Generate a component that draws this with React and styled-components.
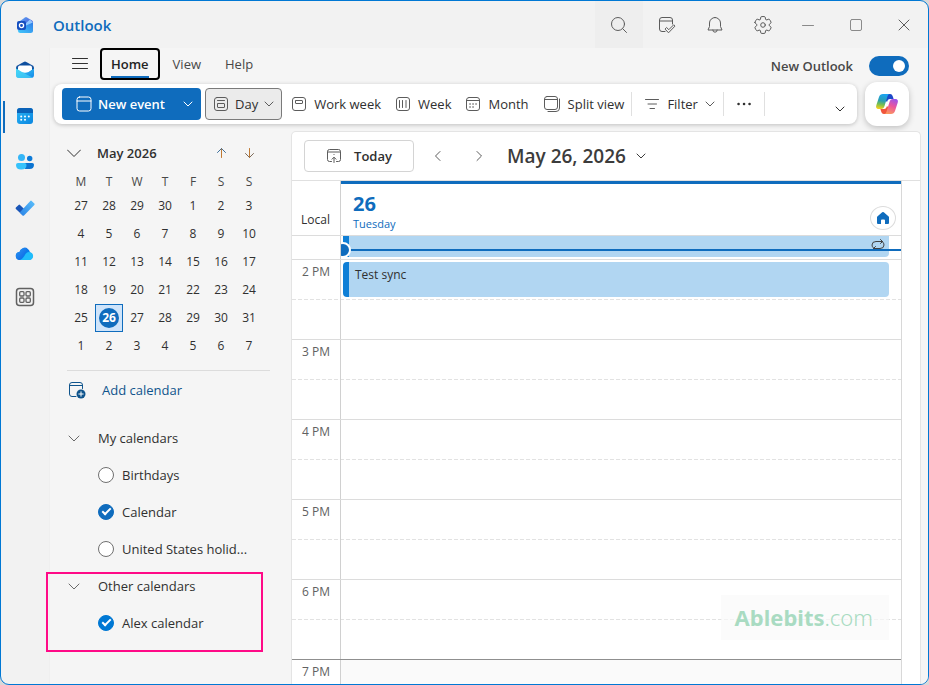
import React, { useState } from "react"
import styled, { createGlobalStyle } from "styled-components"

const DAYS = ["M", "T", "W", "T", "F", "S", "S"]
const WEEKS = [
  [27, 28, 29, 30, 1, 2, 3],
  [4, 5, 6, 7, 8, 9, 10],
  [11, 12, 13, 14, 15, 16, 17],
  [18, 19, 20, 21, 22, 23, 24],
  [25, 26, 27, 28, 29, 30, 31],
  [1, 2, 3, 4, 5, 6, 7],
]
const HOURS = ["3 PM", "4 PM", "5 PM", "6 PM"]

/* ---------- icons ---------- */

const Line = ({ w = 16, h = w, children, ...rest }) => (
  <svg
    width={w}
    height={h}
    viewBox={`0 0 ${w} ${h}`}
    fill="none"
    stroke="currentColor"
    strokeLinecap="round"
    strokeLinejoin="round"
    aria-hidden="true"
    {...rest}
  >
    {children}
  </svg>
)

const ChevronDown = ({ w = 10 }) => (
  <Line w={w} h={w}>
    <path d={`M1 ${w / 2 - 2}L${w / 2} ${w - 3}L${w - 1} ${w / 2 - 2}`} />
  </Line>
)

const WideChevron = () => (
  <Line w={14} h={14}>
    <path d="M.5 4L7 10.5L13.5 4" />
  </Line>
)

const OutlookLogo = () => (
  <svg width="18" height="18" viewBox="0 0 18 18" aria-hidden="true">
    <defs>
      <linearGradient id="olTop" x1="0" y1="0" x2="1" y2="1">
        <stop offset="0" stopColor="#5aa8f5" />
        <stop offset="1" stopColor="#4b3fd0" />
      </linearGradient>
      <linearGradient id="olBody" x1="1" y1="0" x2="0" y2="1">
        <stop offset="0" stopColor="#2f7de8" />
        <stop offset="1" stopColor="#42c8fb" />
      </linearGradient>
    </defs>
    <path d="M4 5L9 1.4Q10 .8 11 1.4L16 4.6Q17 5.3 17 6.5V13H4Z" fill="url(#olTop)" />
    <path d="M8 9L14 3.4L17 6.5L9 13Z" fill="#8fc7ff" />
    <path d="M4 12L17 6.5V14.5Q17 17 14.5 17H4.500Q2 17 2 14.500Z" fill="url(#olBody)" />
    <rect x="1" y="5" width="9" height="9" rx="2" fill="#154fc0" />
    <circle cx="5.5" cy="9.5" r="2.1" fill="none" stroke="#fff" strokeWidth="1.3" />
  </svg>
)

const MailIcon = () => (
  <svg width="20" height="20" viewBox="0 0 20 20" aria-hidden="true">
    <defs>
      <linearGradient id="mailBody" x1="0" y1="0" x2="1" y2="1">
        <stop offset="0" stopColor="#38d0f5" />
        <stop offset="1" stopColor="#1686e8" />
      </linearGradient>
    </defs>
    <path d="M1 8Q1 6.5 2.4 5.6L8.7 1.9Q10 1.2 11.3 1.9L17.6 5.6Q19 6.5 19 8V12H1Z" fill="#0f4f9f" />
    <path d="M3 7.500Q3 5.500 5 5.500H15Q17 5.500 17 7.500V10L13 13H7L3 10Z" fill="#fff" />
    <path d="M1 8.500L6.500 12Q10 13.500 13.500 12L19 8.500V15Q19 18 16 18H4Q1 18 1 15Z" fill="url(#mailBody)" />
    <path d="M1 8.500L9 13Q12 14.500 17.500 17.500Q16.800 18 16 18H4Q1 18 1 15Z" fill="#4fdcf8" opacity=".6" />
  </svg>
)

const CalendarIcon = () => (
  <svg width="18" height="18" viewBox="0 0 18 18" aria-hidden="true">
    <defs>
      <linearGradient id="calBody" x1="0" y1="0" x2="1" y2="1">
        <stop offset="0" stopColor="#2ab4f4" />
        <stop offset="1" stopColor="#0a86e0" />
      </linearGradient>
    </defs>
    <rect x="1" y="1" width="16" height="16" rx="3" fill="url(#calBody)" />
    <path d="M1 6V4Q1 1 4 1H14Q17 1 17 4V6Z" fill="#0b62b8" />
    <g fill="#fff">
      <circle cx="9" cy="9.500" r="1" />
      <circle cx="12.800" cy="9.500" r="1" />
      <circle cx="5.200" cy="9.500" r="1" />
      <circle cx="5.200" cy="12.800" r="1" />
      <circle cx="9" cy="12.800" r="1" />
    </g>
  </svg>
)

const PeopleIcon = () => (
  <svg width="20" height="18" viewBox="0 0 20 18" aria-hidden="true">
    <circle cx="14.700" cy="5.500" r="2.700" fill="#0c7bd8" />
    <path d="M9 10H17.200Q19 10 19 11.800Q19 16 14.500 16H10Z" fill="#0b74d1" />
    <circle cx="6.500" cy="4.500" r="3.500" fill="#35b6f7" />
    <path d="M1 12Q1 10 3 10H9.500Q11.500 10 11.500 12Q11.500 16.500 6.200 16.500Q1 16.500 1 12Z" fill="#35c2fb" />
  </svg>
)

const TodoIcon = () => (
  <svg width="20" height="16" viewBox="0 0 20 16" aria-hidden="true">
    <defs>
      <linearGradient id="todo" x1="0" y1="1" x2="1" y2="0">
        <stop offset="0" stopColor="#2a83e6" />
        <stop offset="1" stopColor="#5cc0fb" />
      </linearGradient>
    </defs>
    <path d="M.900 7.600L3.600 4.900Q4.300 4.200 5 4.900L10.500 10.200L7.800 15.500L.9 9Q.2 8.300 .9 7.600Z" fill="#1a56b8" />
    <path d="M5.200 11.900L15.300 .900Q16 .200 16.700 .900L19.300 3.500Q20 4.200 19.300 4.900L9 15.500Q8.400 16.100 7.700 15.500L5.200 13.100Q4.600 12.500 5.200 11.900Z" fill="url(#todo)" />
  </svg>
)

const OneDriveIcon = () => (
  <svg width="20" height="14" viewBox="0 0 20 14" aria-hidden="true">
    <defs>
      <linearGradient id="cloud" x1="0" y1="0" x2="1" y2="1">
        <stop offset="0" stopColor="#2a9af5" />
        <stop offset="1" stopColor="#0a5de0" />
      </linearGradient>
    </defs>
    <path d="M4.500 5A5.500 5.500 0 0 1 15 5.200A4.200 4.200 0 0 1 15 13H5A4 4 0 0 1 4.500 5Z" fill="#0b7bea" />
    <path d="M1 9A4 4 0 0 1 4.500 5A5.500 5.500 0 0 1 12.500 1.300L5.500 12.900A4 4 0 0 1 1 9Z" fill="url(#cloud)" />
    <path d="M10.500 7Q12.500 4.200 15 5.200A4 4 0 0 1 15 13H5Q8 12 10.500 7Z" fill="#20bdfb" />
  </svg>
)

const AppsIcon = () => (
  <Line w={20} color="#616161">
    <rect x="1.500" y="1.500" width="17" height="17" rx="3" strokeWidth="1.500" />
    <g strokeWidth="1.300">
      <rect x="4.700" y="4.700" width="4.300" height="4.300" rx="1" />
      <rect x="11" y="4.700" width="4.300" height="4.300" rx="1" />
      <rect x="4.700" y="11" width="4.300" height="4.300" rx="1" />
      <rect x="11" y="11" width="4.300" height="4.300" rx="1" />
    </g>
  </Line>
)

const SearchIcon = () => (
  <Line w={18}>
    <circle cx="8" cy="8" r="6.500" />
    <path d="M12.800 12.800L16.500 16.500" />
  </Line>
)

const MyDayIcon = () => (
  <Line w={18}>
    <path d="M7 15.500H4Q1.500 15.500 1.500 13V4Q1.500 1.500 4 1.500H12Q14.500 1.500 14.500 4V8M1.500 5H14.500" />
    <path d="M7.300 12.800L8.600 11.500L10.800 13.700L15.700 8.800L17 10.100L10.800 16.500Z" />
  </Line>
)

const BellIcon = () => (
  <Line w={18}>
    <path d="M9 1.500A5.500 5.500 0 0 0 3.500 7V10.500L2 14H16L14.500 10.500V7A5.500 5.500 0 0 0 9 1.500Z" />
    <path d="M6.800 14A2.200 2.200 0 0 0 11.200 14" />
  </Line>
)

const GearIcon = () => (
  <Line w={20}>
    <path d="M1.910 7.380A8.500 8.500 0 0 1 3.700 4.300a.5.5 0 0 1 .54-.13l1.920.68a1 1 0 0 0 1.320-.76l.36-2a.5.5 0 0 1 .4-.4 8.530 8.530 0 0 1 3.550 0c.2.040.35.2.38.4l.37 2a1 1 0 0 0 1.320.76l1.920-.68a.5.5 0 0 1 .54.13 8.500 8.500 0 0 1 1.780 3.080c.060.2 0 .4-.15.54l-1.560 1.320a1 1 0 0 0 0 1.520l1.560 1.320a.5.5 0 0 1 .15.54 8.500 8.500 0 0 1-1.780 3.080.5.5 0 0 1-.54.13l-1.920-.68a1 1 0 0 0-1.320.76l-.37 2a.5.5 0 0 1-.38.4 8.530 8.530 0 0 1-3.560 0 .5.5 0 0 1-.39-.4l-.36-2a1 1 0 0 0-1.320-.76l-1.920.68a.5.5 0 0 1-.54-.13 8.500 8.500 0 0 1-1.780-3.080.5.5 0 0 1 .15-.54l1.560-1.320a1 1 0 0 0 0-1.520L2.060 7.920a.5.5 0 0 1-.15-.54Z" />
    <circle cx="10" cy="10" r="2.300" />
  </Line>
)

const WindowIcon = () => (
  <Line w={16}>
    <rect x="1" y="1" width="14" height="14" rx="2.500" />
    <path d="M1 5H15" />
  </Line>
)

const DayIcon = () => (
  <Line w={16}>
    <rect x="1.500" y="1.500" width="13" height="13" rx="2.500" />
    <path d="M4.500 4.500H11.500" />
    <rect x="4.500" y="7.500" width="7" height="4" rx=".5" />
  </Line>
)

const WorkWeekIcon = () => (
  <Line w={16}>
    <rect x="1.500" y="1.500" width="13" height="13" rx="2.500" />
    <rect x="4.500" y="4.500" width="7" height="3" rx=".5" />
  </Line>
)

const WeekIcon = () => (
  <Line w={16}>
    <rect x="1.500" y="1.500" width="13" height="13" rx="2.500" />
    <path d="M4.500 4.500V11.500M7.500 4.500V11.500M11 4.500V11.500" />
  </Line>
)

const MonthIcon = () => (
  <Line w={16}>
    <rect x="1.500" y="1.500" width="13" height="13" rx="2.500" />
    <path d="M1.500 4.500H14.500" />
    <path d="M8 8H8.100M11 8H11.100M5 11H5.100M8 11H8.100M5 8H5.100" strokeWidth="1.600" />
  </Line>
)

const SplitIcon = () => (
  <Line w={18}>
    <rect x="1.500" y="1.500" width="13" height="13" rx="2.500" />
    <path d="M1.500 4.500H14.500M16.500 4V13Q16.500 16.500 13 16.500H5" />
  </Line>
)

const FilterIcon = () => (
  <Line w={16}>
    <path d="M1.500 3.500H14.500M4 8H12.500M6 12.500H10.500" />
  </Line>
)

const TodayIcon = () => (
  <Line w={16}>
    <path d="M5.500 13.500H3.500Q1.500 13.500 1.500 11.500V3.500Q1.500 1.500 3.500 1.500H12.500Q14.500 1.500 14.500 3.500V11.500Q14.500 13.500 12.500 13.500H10.500M1.500 4H14.500" />
    <path d="M8 14.500V9.500M6 11.200L8 9.200L10 11.200M8 6.500V6.600" />
  </Line>
)

const AddCalendarIcon = () => (
  <Line w={18} h={18}>
    <path d="M8 15.500H4Q1.500 15.500 1.500 13V4Q1.500 1.500 4 1.500H12Q14.500 1.500 14.500 4V7.500M1.500 4.500H14.500" />
    <circle cx="13" cy="13" r="4.500" fill="currentColor" stroke="none" />
    <path d="M13 10.800V15.200M10.800 13H15.200" stroke="#fff" />
  </Line>
)

const CopilotIcon = () => (
  <svg width="24" height="22" viewBox="-1 -1 24 22" aria-hidden="true">
    <defs>
      <linearGradient id="cpLeft" x1=".5" y1="0" x2=".3" y2="1">
        <stop offset="0" stopColor="#1ba4f2" />
        <stop offset=".45" stopColor="#2b9fb0" />
        <stop offset=".7" stopColor="#76bf50" />
        <stop offset="1" stopColor="#f8cf1c" />
      </linearGradient>
      <linearGradient id="cpRight" x1=".7" y1="0" x2=".3" y2="1">
        <stop offset="0" stopColor="#a053e8" />
        <stop offset=".45" stopColor="#ec559b" />
        <stop offset="1" stopColor="#fb9a5c" />
      </linearGradient>
    </defs>
    <path d="M9.500 0H14C16 0 16.500 1.500 17 3L17.600 5H14C12 5 11.500 6.500 11 8L9 6Z" fill="#1d49c9" />
    <path d="M12.500 20H8C6 20 5.400 18.500 5 17L4.400 15H8C10 15 10.500 13.500 11 12L13 14Z" fill="#f0553c" />
    <path d="M7 0H14C12 0 11.500 2 11 4L8.500 12C8 14 7 15 5 15H3C0 15-.3 13 .4 11L3 3C3.600 1 5 0 7 0Z" fill="url(#cpLeft)" />
    <path d="M19 5C22 5 22.300 7 21.600 9L19 17C18.400 19 17 20 15 20H8C10 20 10.500 18 11 16L13.500 8C14 6 15 5 17 5Z" fill="url(#cpRight)" />
  </svg>
)

const HomeIcon = () => (
  <svg width="14" height="14" viewBox="0 0 14 14" fill="#0f6cbd" aria-hidden="true">
    <path d="M6.200 1.300Q7 .600 7.800 1.300L12.400 5.200Q13 5.700 13 6.500V12Q13 13 12 13H9.500Q9 13 9 12.500V9.500Q9 8.500 8 8.500H6Q5 8.500 5 9.500V12.500Q5 13 4.500 13H2Q1 13 1 12V6.500Q1 5.700 1.600 5.200Z" />
  </svg>
)

const RepeatIcon = () => (
  <Line w={16} h={12} color="#424242">
    <path d="M10.500 .500L12.500 2.500L10.500 4.500M12.500 2.500H6Q2 2.500 2 6Q2 8 3.500 9M5.500 11.500L3.500 9.500L5.500 7.500M3.500 9.500H10Q14 9.500 14 6Q14 4 12.500 2.800" />
  </Line>
)

/* ---------- app ---------- */

const MiniCalendar = () => (
  <MonthTable>
    <thead>
      <tr>
        {DAYS.map((day, i) => (
          <th key={i} scope="col">{day}</th>
        ))}
      </tr>
    </thead>
    <tbody>
      {WEEKS.map((week, w) => (
        <tr key={w}>
          {week.map(date => (
            <td key={date}>
              <DateButton $selected={w === 4 && date === 26}>
                <span>{date}</span>
              </DateButton>
            </td>
          ))}
        </tr>
      ))}
    </tbody>
  </MonthTable>
)

const CalendarItem = ({ name, defaultChecked, color }) => (
  <ItemLabel>
    <RoundCheck type="checkbox" defaultChecked={defaultChecked} $color={color} />
    <span>{name}</span>
  </ItemLabel>
)

const App = () => {
  const [newOutlook, setNewOutlook] = useState(true)
  return (
    <Window>
      <GlobalStyle />
      <TitleBar>
        <LogoSlot>
          <OutlookLogo />
        </LogoSlot>
        <AppName>Outlook</AppName>
        <TitleButton aria-label="Search" $shaded><SearchIcon /></TitleButton>
        <TitleButton aria-label="My Day"><MyDayIcon /></TitleButton>
        <TitleButton aria-label="Notifications"><BellIcon /></TitleButton>
        <TitleButton aria-label="Settings"><GearIcon /></TitleButton>
        <WindowControls>
          <TitleButton aria-label="Minimize" $dim>
            <Line w={12}><path d="M.5 6.500H11.500" /></Line>
          </TitleButton>
          <TitleButton aria-label="Maximize" $dim>
            <Line w={12}><rect x=".5" y=".5" width="11" height="11" rx="1.500" /></Line>
          </TitleButton>
          <TitleButton aria-label="Close">
            <Line w={12}><path d="M1 1L11 11M11 1L1 11" /></Line>
          </TitleButton>
        </WindowControls>
      </TitleBar>

      <Body>
        <Rail aria-label="Apps">
          <RailButton aria-label="Mail"><MailIcon /></RailButton>
          <RailButton aria-label="Calendar" $active><CalendarIcon /></RailButton>
          <RailButton aria-label="People"><PeopleIcon /></RailButton>
          <RailButton aria-label="To Do"><TodoIcon /></RailButton>
          <RailButton aria-label="OneDrive"><OneDriveIcon /></RailButton>
          <RailButton aria-label="More apps" $short><AppsIcon /></RailButton>
        </Rail>

        <Content>
          <TabRow>
            <MenuButton aria-label="Navigation pane">
              <Line w={18} h={14}><path d="M1.500 1.500H16.500M1.500 6.500H16.500M1.500 11.500H16.500" /></Line>
            </MenuButton>
            <Tab $active><span>Home</span></Tab>
            <Tab><span>View</span></Tab>
            <Tab><span>Help</span></Tab>
            <SwitchLabel>
              New Outlook
              <Switch
                type="checkbox"
                role="switch"
                checked={newOutlook}
                onChange={e => setNewOutlook(e.target.checked)}
              />
            </SwitchLabel>
          </TabRow>

          <ToolRow>
            <Ribbon>
              <NewEvent>
                <NewEventMain><WindowIcon />New event</NewEventMain>
                <NewEventMore aria-label="More new items"><ChevronDown /></NewEventMore>
              </NewEvent>
              <ViewButton $active><DayIcon />Day<ChevronDown /></ViewButton>
              <ViewButton><WorkWeekIcon />Work week</ViewButton>
              <ViewButton><WeekIcon />Week</ViewButton>
              <ViewButton><MonthIcon />Month</ViewButton>
              <ViewButton><SplitIcon />Split view</ViewButton>
              <Separator />
              <FilterButton><FilterIcon />Filter<ChevronDown /></FilterButton>
              <Separator />
              <MoreButton aria-label="More options">
                <Line w={16}>
                  <path d="M2.500 8H2.600M8 8H8.100M13.500 8H13.600" strokeWidth="2.500" />
                </Line>
              </MoreButton>
              <Separator />
              <ExpandButton aria-label="Ribbon options"><ChevronDown /></ExpandButton>
            </Ribbon>
            <CopilotButton aria-label="Copilot"><CopilotIcon /></CopilotButton>
          </ToolRow>

          <Main>
            <SidePane>
              <MonthHeader>
                <PaneButton aria-label="Collapse"><WideChevron /></PaneButton>
                <MonthName>May 2026</MonthName>
                <ArrowButton aria-label="Previous month">
                  <Line w={12}><path d="M5.500 10.500V1.500" /><path d="M1.500 5.500L5.500 1.500L9.500 5.500" stroke="#3d6f9c" /></Line>
                </ArrowButton>
                <ArrowButton aria-label="Next month">
                  <Line w={12}><path d="M5.500 1.500V10.500" /><path d="M1.500 6.500L5.500 10.500L9.500 6.500" stroke="#7d6a58" /></Line>
                </ArrowButton>
              </MonthHeader>
              <MiniCalendar />
              <AddCalendar><AddCalendarIcon />Add calendar</AddCalendar>
              <Group>
                <GroupHeader><ChevronDown w={12} />My calendars</GroupHeader>
                <CalendarItem name="Birthdays" />
                <CalendarItem name="Calendar" defaultChecked color="#0f6cbd" />
                <CalendarItem name="United States holid..." />
              </Group>
              <Group $highlighted>
                <GroupHeader><ChevronDown w={12} />Other calendars</GroupHeader>
                <CalendarItem name="Alex calendar" defaultChecked color="#0078d4" />
              </Group>
            </SidePane>

            <Surface>
              <SurfaceHeader>
                <TodayButton><TodayIcon />Today</TodayButton>
                <StepButton aria-label="Previous day">
                  <Line w={12}><path d="M8 1.500L3.500 6L8 10.500" /></Line>
                </StepButton>
                <StepButton aria-label="Next day">
                  <Line w={12}><path d="M4 1.500L8.500 6L4 10.500" /></Line>
                </StepButton>
                <DateTitle>May 26, 2026<ChevronDown /></DateTitle>
              </SurfaceHeader>
              <DayGrid>
                <HeaderRow>
                  <ZoneCell>Local</ZoneCell>
                  <DayHeader>
                    <div>
                      <DayNumber>26</DayNumber>
                      <DayName>Tuesday</DayName>
                    </div>
                    <PlaceButton aria-label="Work location"><HomeIcon /></PlaceButton>
                  </DayHeader>
                </HeaderRow>
                <CurrentRow>
                  <TimeCell />
                  <DaySlot>
                    <EarlierEvent><RepeatIcon /></EarlierEvent>
                    <NowLine />
                  </DaySlot>
                </CurrentRow>
                <HourRow>
                  <TimeCell>2 PM</TimeCell>
                  <DaySlot><Event>Test sync</Event></DaySlot>
                </HourRow>
                {HOURS.map(hour => (
                  <HourRow key={hour} $dayEnd={hour === "6 PM"}>
                    <TimeCell>{hour}</TimeCell>
                    <DaySlot />
                  </HourRow>
                ))}
                <HourRow $off>
                  <TimeCell>7 PM</TimeCell>
                  <DaySlot />
                </HourRow>
              </DayGrid>
              <Watermark><b>Ablebits</b>.com</Watermark>
            </Surface>
          </Main>
        </Content>
      </Body>
    </Window>
  )
}

export default App

const GlobalStyle = createGlobalStyle`
  *,
  *::before,
  *::after {
    box-sizing: border-box;
  }
  body {
    margin: 0;
    background: #d8d8d8;
    color: #303030;
    font-family: "Open Sans", "Noto Sans", sans-serif;
    font-size: 13px;
    line-height: 20px;
  }
  button {
    margin: 0;
    padding: 0;
    border: 0;
    background: none;
    color: inherit;
    font: inherit;
  }
  svg {
    flex: none;
    display: block;
  }
`

const Window = styled.div`
  display: flex;
  flex-direction: column;
  height: 100vh;
  overflow: hidden;
  border: 1px solid #0078d4;
  border-radius: 9px;
  background: #f2f2f2;
`

const TitleBar = styled.header`
  display: flex;
  flex: none;
  align-items: center;
  height: 47px;
`

const LogoSlot = styled.div`
  display: flex;
  justify-content: center;
  width: 48px;
`

const AppName = styled.div`
  flex: 1;
  padding-left: 4px;
  color: #0f6cbd;
  font-size: 15px;
  font-weight: 600;
`

const TitleButton = styled.button`
  display: flex;
  align-items: center;
  justify-content: center;
  width: 48px;
  height: 47px;
  color: ${p => (p.$dim ? "#8a8a8a" : "#5c5c5c")};
  background: ${p => (p.$shaded ? "#eeeeee" : "none")};
`

const WindowControls = styled.div`
  display: flex;
  margin-left: -3px;
`

const Body = styled.div`
  display: flex;
  flex: 1;
  min-height: 0;
`

const Rail = styled.nav`
  flex: none;
  width: 49px;
  border-right: 1px solid #efefef;
`

const RailButton = styled.button`
  display: flex;
  align-items: center;
  justify-content: center;
  position: relative;
  width: 48px;
  height: ${p => (p.$short ? 40 : 46)}px;
  padding-bottom: 2px;

  &::before {
    content: "";
    display: ${p => (p.$active ? "block" : "none")};
    position: absolute;
    left: 2px;
    top: 7px;
    width: 2px;
    height: 32px;
    background: #0f6cbd;
  }
`

const Content = styled.div`
  display: flex;
  flex: 1;
  flex-direction: column;
  min-width: 0;
  background: #f5f5f5;
`

const TabRow = styled.div`
  display: flex;
  flex: none;
  height: 36px;
  padding: 0 19px 0 14px;
`

const MenuButton = styled.button`
  display: flex;
  align-items: center;
  justify-content: center;
  width: 32px;
  height: 32px;
  margin-right: 4px;
`

const Tab = styled.button`
  display: flex;
  align-items: center;
  height: 32px;
  padding: 0 9px;
  margin-right: 2px;
  border: 2px solid ${p => (p.$active ? "#000" : "transparent")};
  border-radius: 4px;
  font-weight: ${p => (p.$active ? 600 : 400)};
  color: ${p => (p.$active ? "#242424" : "#484848")};

  span {
    height: 28px;
    line-height: 28px;
    border-bottom: 2px solid ${p => (p.$active ? "#0f6cbd" : "transparent")};
  }
`

const SwitchLabel = styled.label`
  display: flex;
  align-items: center;
  gap: 16px;
  margin-left: auto;
  font-weight: 600;
  color: #484848;
`

const Switch = styled.input`
  appearance: none;
  width: 40px;
  height: 20px;
  margin: 0;
  padding: 4px;
  border-radius: 10px;
  background: ${p => (p.checked ? "#0f6cbd" : "#8a8a8a")};

  &::before {
    content: "";
    display: block;
    width: 12px;
    height: 12px;
    margin-left: ${p => (p.checked ? "auto" : 0)};
    border-radius: 50%;
    background: #fff;
  }
`

const ToolRow = styled.div`
  display: flex;
  flex: none;
  align-items: center;
  gap: 8px;
  height: 40px;
  padding: 0 19px 0 4px;
`

const Ribbon = styled.div`
  display: flex;
  flex: 1;
  align-items: center;
  height: 40px;
  padding: 0 8px;
  border-radius: 8px;
  background: #fff;
  box-shadow: 0 1px 4px rgba(0, 0, 0, 0.22);
`

const NewEvent = styled.div`
  display: flex;
  height: 32px;
  margin-right: 4px;
  border-radius: 4px;
  background: #0f6cbd;
  color: #fff;
  font-weight: 600;
`

const NewEventMain = styled.button`
  display: flex;
  align-items: center;
  gap: 6px;
  width: 113px;
  padding-left: 14px;
  white-space: nowrap;
`

const NewEventMore = styled.button`
  display: flex;
  align-items: center;
  justify-content: center;
  width: 26px;
`

const ViewButton = styled.button`
  display: flex;
  align-items: center;
  gap: ${p => (p.$active ? 6 : 7)}px;
  height: 32px;
  padding: 0 7px;
  margin-right: ${p => (p.$active ? 2 : 0)}px;
  border: ${p => (p.$active ? "1px solid #7a7a7a" : 0)};
  border-radius: 4px;
  background: ${p => (p.$active ? "#ebebeb" : "none")};
  white-space: nowrap;

  svg {
    color: #5c5c5c;
  }
`

const FilterButton = styled(ViewButton)`
  padding: 0 8px 0 12px;
`

const MoreButton = styled.button`
  display: flex;
  align-items: center;
  justify-content: center;
  width: 40px;
  height: 32px;
`

const Separator = styled.div`
  width: 1px;
  height: 24px;
  background: #e0e0e0;
`

const ExpandButton = styled.button`
  display: flex;
  align-items: flex-end;
  height: 28px;
  margin-left: auto;
  padding: 4px;
`

const CopilotButton = styled.button`
  display: flex;
  align-items: center;
  justify-content: center;
  width: 44px;
  height: 44px;
  border-radius: 12px;
  background: #fff;
  box-shadow: 0 2px 6px rgba(0, 0, 0, 0.22);
`

const Main = styled.div`
  display: flex;
  flex: 1;
  min-height: 0;
  padding: 7px 7px 0 0;
`

const SidePane = styled.aside`
  flex: none;
  width: 241px;
  padding: 5px 21px 0 17px;
`

const MonthHeader = styled.div`
  display: flex;
  align-items: center;
  height: 34px;
`

const PaneButton = styled.button`
  width: 14px;
`

const MonthName = styled.div`
  flex: 1;
  padding-left: 16px;
  font-weight: 600;
`

const ArrowButton = styled.button`
  display: flex;
  justify-content: center;
  width: 28px;
  color: #c07a34;

  &:last-child {
    margin-right: 6px;
  }
`

const MonthTable = styled.table`
  border-collapse: collapse;
  font-size: 12px;
  line-height: 16px;

  th,
  td {
    width: 28px;
    padding: 0;
    text-align: center;
    font-weight: 400;
  }

  th {
    height: 22px;
    padding-top: 2px;
    color: #484848;
  }
`

const DateButton = styled.button`
  display: flex;
  align-items: center;
  justify-content: center;
  width: 28px;
  height: 28px;
  border: ${p => (p.$selected ? "1px solid #0f6cbd" : 0)};
  background: ${p => (p.$selected ? "#cfe4fa" : "none")};
  color: ${p => (p.$selected ? "#fff" : "#303030")};
  font-weight: ${p => (p.$selected ? 700 : 400)};

  span {
    width: 20px;
    border-radius: 10px;
    line-height: 20px;
    background: ${p => (p.$selected ? "#0f6cbd" : "none")};
  }
`

const AddCalendar = styled.button`
  display: flex;
  align-items: center;
  gap: 16px;
  width: 100%;
  height: 39px;
  margin-top: 10px;
  border-top: 1px solid #dcdcdc;
  color: #0f548c;

  svg {
    margin-left: 1px;
  }
`

const Group = styled.div`
  position: relative;
  margin-top: ${p => (p.$highlighted ? 0 : 10)}px;

  &::after {
    content: "";
    display: ${p => (p.$highlighted ? "block" : "none")};
    position: absolute;
    inset: 5px 7px -11px -21px;
    border: 2px solid #ff0a87;
    pointer-events: none;
  }
`

const GroupHeader = styled.button`
  display: flex;
  align-items: center;
  gap: 18px;
  width: 100%;
  height: 37px;
  padding-left: 1px;

  svg {
    color: #6a6a6a;
  }
`

const ItemLabel = styled.label`
  display: flex;
  align-items: center;
  gap: 8px;
  height: 37px;
  padding-left: 31px;
  white-space: nowrap;
`

const RoundCheck = styled.input`
  appearance: none;
  display: flex;
  align-items: center;
  justify-content: center;
  flex: none;
  width: 16px;
  height: 16px;
  margin: 0;
  border: 1px solid #707070;
  border-radius: 50%;
  background: #fff;

  &:checked {
    border-color: ${p => p.$color};
    background: ${p => p.$color};
  }

  &:checked::after {
    content: "";
    width: 9px;
    height: 5px;
    margin-bottom: 2px;
    border: solid #fff;
    border-width: 0 0 2px 2px;
    transform: rotate(-45deg);
  }
`

const Surface = styled.main`
  display: flex;
  flex: 1;
  flex-direction: column;
  position: relative;
  min-width: 0;
  overflow: hidden;
  border: 1px solid #e4e4e4;
  border-bottom: 0;
  border-radius: 5px 5px 0 0;
  background: #fff;
`

const SurfaceHeader = styled.div`
  display: flex;
  flex: none;
  align-items: center;
  height: 49px;
  padding-left: 12px;
  border-bottom: 1px solid #e0e0e0;
`

const TodayButton = styled.button`
  display: flex;
  align-items: center;
  justify-content: center;
  gap: 12px;
  width: 110px;
  height: 32px;
  margin-right: 3px;
  border: 1px solid #d4d4d4;
  border-radius: 4px;
  font-weight: 600;

  svg {
    color: #5c5c5c;
  }
`

const StepButton = styled.button`
  display: flex;
  align-items: center;
  justify-content: center;
  width: 41px;
  height: 32px;
  color: #5c5c5c;
`

const DateTitle = styled.button`
  display: flex;
  align-items: center;
  gap: 10px;
  margin-left: 8px;
  color: #3c3c3c;
  font-size: 19px;
  font-weight: 600;
  line-height: 28px;
`

const DayGrid = styled.div`
  flex: 1;
  min-height: 0;
  margin-right: 18px;
  overflow: hidden;
  border-right: 1px solid #d8d8d8;
`

const Row = styled.div`
  display: grid;
  grid-template-columns: 49px 1fr;
`

const HeaderRow = styled(Row)`
  height: 55px;
  border-bottom: 1px solid #dcdcdc;
`

const ZoneCell = styled.div`
  padding: 29px 10px 0 0;
  border-right: 1px solid #d0d0d0;
  font-size: 12px;
  text-align: right;
`

const DayHeader = styled.div`
  display: flex;
  justify-content: space-between;
  padding: 6px 5px 0 12px;
  border-top: 3px solid #0f6cbd;
  color: #0f6cbd;
`

const DayNumber = styled.div`
  font-size: 20px;
  font-weight: 700;
  line-height: 28px;
`

const DayName = styled.div`
  font-size: 11px;
  line-height: 12px;
`

const PlaceButton = styled.button`
  display: flex;
  align-items: center;
  justify-content: center;
  width: 26px;
  height: 24px;
  margin-top: 16px;
  border: 1px solid #dcdcdc;
  border-radius: 50%;
`

const CurrentRow = styled(Row)`
  height: 24px;
  border-bottom: 1px solid #dcdcdc;
`

const TimeCell = styled.div`
  padding: 2px 10px 0 0;
  border-right: 1px solid #d0d0d0;
  color: #616161;
  font-size: 12px;
  text-align: right;
`

const DaySlot = styled.div`
  position: relative;
  min-width: 0;
  padding: 2px 12px 0 2px;
  overflow: hidden;
`

const HourRow = styled(Row)`
  height: 80px;
  border-bottom: 1px solid ${p => (p.$dayEnd ? "#8f8f8f" : "#dcdcdc")};
  background: repeating-linear-gradient(90deg, #e2e2e2 0 4px, transparent 4px 6px) 0 39px / 100% 1px no-repeat;

  ${DaySlot} {
    background: ${p => (p.$off ? "#fafafa" : "none")};
  }
`

const Event = styled.div`
  height: 35px;
  padding: 3px 6px;
  border-left: 6px solid #0f7fd6;
  border-radius: 4px;
  background: #b1d6f2;
  font-size: 12px;
  font-weight: 500;
`

const EarlierEvent = styled.div`
  display: flex;
  justify-content: flex-end;
  height: 21px;
  margin-top: -2px;
  padding: 3px 3px 0 0;
  border-left: 6px solid #0f7fd6;
  border-radius: 0 0 4px 4px;
  background: #b1d6f2;
`

const NowLine = styled.div`
  position: absolute;
  top: 13px;
  left: 0;
  right: 0;
  height: 2px;
  background: #0f6cbd;

  &::before {
    content: "";
    position: absolute;
    left: -5px;
    top: -7px;
    width: 16px;
    height: 16px;
    margin-left: -1px;
    border: 2px solid #fff;
    border-radius: 50%;
    background: #0f6cbd;
  }
`

const Watermark = styled.div`
  position: absolute;
  right: 31px;
  bottom: 44px;
  padding: 8px 16px 8px 14px;
  background: rgba(250, 250, 250, 0.7);
  color: #a9dbc2;
  font-family: "Noto Sans", sans-serif;
  font-size: 22px;
  font-weight: 300;
  line-height: 29px;

  b {
    font-weight: 700;
  }
`
